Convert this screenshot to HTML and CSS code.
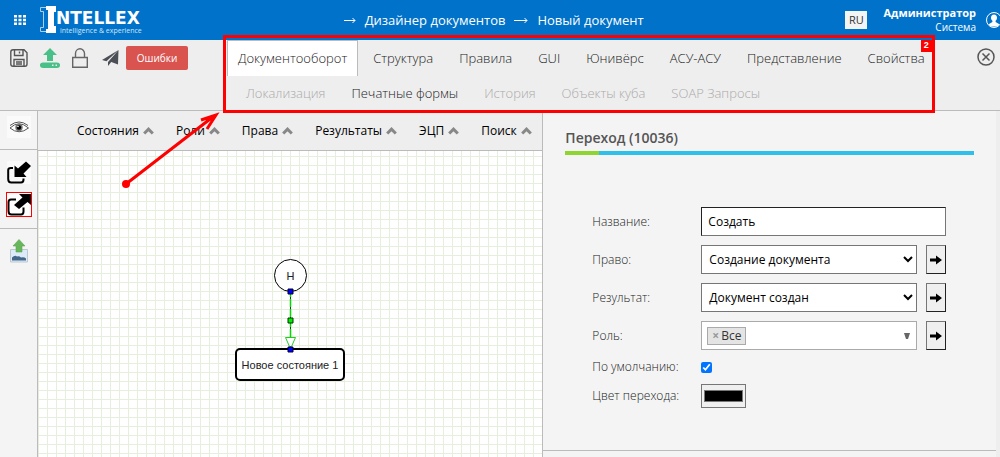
FILE: index.html
```html
<!DOCTYPE html>
<html lang="ru">
<head>
<meta charset="utf-8">
<meta name="viewport" content="width=device-width, initial-scale=1">
<title>Дизайнер документов</title>
<link rel="stylesheet" href="styles.css">
</head>
<body>
<div class="app">
  <header class="header">
    <button class="icon-btn apps" aria-label="Приложения">
      <svg width="12" height="10" viewBox="0 0 12 10" fill="#fff"><path d="M0 0h3v2.6H0zM4.5 0h3v2.6h-3zM9 0h3v2.6H9zM0 3.7h3v2.6H0zM4.5 3.7h3v2.6h-3zM9 3.7h3v2.6H9zM0 7.4h3V10H0zM4.5 7.4h3V10h-3zM9 7.4h3V10H9z"/></svg>
    </button>
    <a class="logo" href="#" aria-label="Intellex">
      <svg class="logo-mark" width="16" height="27" viewBox="0 0 16 27"><path d="M6 1.500H.5v4h3v16h-3v4H6" fill="none" stroke="#a9d0f0"/><path d="M6 0h10v6h-2v14h2v7H6v-4h2V4H6z" fill="#fff"/></svg>
      <span class="logo-text"><b class="logo-name">NTELLEX</b><small class="logo-sub">intelligence &amp; experience</small></span>
    </a>
    <nav class="crumbs">
      <svg width="12" height="7" viewBox="0 0 12 7" fill="none" stroke="#fff"><path d="M0 3.500h11M8.500 1l2.500 2.500L8.500 6"/></svg>
      <a href="#">Дизайнер документов</a>
      <svg width="14" height="7" viewBox="0 0 14 7" fill="none" stroke="#fff"><path d="M0 3.500h13M10.500 1l2.500 2.500L10.500 6"/></svg>
      <a href="#">Новый документ</a>
    </nav>
    <button class="lang">RU</button>
    <div class="user"><b>Администратор</b><span>Система</span></div>
    <div class="avatar">
      <svg width="18" height="18" viewBox="0 0 18 18"><circle cx="9" cy="9" r="7.500" fill="none" stroke="#fff"/><path d="M9 3.500c-2 0-3 1.500-3 3.200 0 1.400.6 2.500 1.400 3.100v1.300L4 13v1l2 1.500h6l2-1.500v-1l-3.400-1.900V9.800c.8-.6 1.400-1.700 1.400-3.100 0-1.700-1-3.200-3-3.200z" fill="#fff"/></svg>
    </div>
  </header>

  <section class="toolbar">
    <div class="tools">
      <button class="icon-btn" aria-label="Сохранить"><svg width="18" height="18" viewBox="0 0 18 18" fill="none" stroke="#555" stroke-width="1.400"><path d="M3 .8h11l3 3V15q0 2.200-2 2.200H3Q.8 17.200.8 15V3Q.8.800 3 .800z"/><path d="M4.500 1v5.500h8.500V1M9.500 2.500v2M4 17v-6.500h10V17M6 13h6M6 15h6"/></svg></button>
      <button class="icon-btn" aria-label="Загрузить"><svg width="20" height="20" viewBox="0 0 20 20" fill="#48c088"><path d="M10 0l7 7h-4v6H7V7H3z"/><path fill-rule="evenodd" d="M3 14.500h14a3 2.700 0 0 1 0 5.500H3a3 2.700 0 0 1 0-5.500zM12 16.500v1.500h1.500v-1.500zM15.500 16.500v1.500H17v-1.500z"/></svg></button>
      <button class="icon-btn" aria-label="Заблокировать"><svg width="16" height="20" viewBox="0 0 16 20" fill="none" stroke="#666" stroke-width="1.400"><path d="M.7 9.500h14.600v9.700H.700zM3.500 9.500V5.500a4.500 4.700 0 0 1 9 0v4"/></svg></button>
      <button class="icon-btn" aria-label="Отправить"><svg width="19" height="16" viewBox="0 0 19 16" fill="#4c4f55"><path d="M18.500 0L2 10l4.500 1.300zM18.500 0L8 12v4l2.800-3.400zM18.500 0L10 11.500l8 3z"/></svg></button>
      <button class="errors">Ошибки</button>
    </div>
    <nav class="tabs">
      <div class="tab-row">
        <button class="tab active">Документооборот</button>
        <button class="tab">Структура</button>
        <button class="tab">Правила</button>
        <button class="tab">GUI</button>
        <button class="tab">Юнивёрс</button>
        <button class="tab">АСУ-АСУ</button>
        <button class="tab">Представление</button>
        <button class="tab">Свойства</button>
      </div>
      <div class="tab-row second">
        <button class="tab" disabled>Локализация</button>
        <button class="tab">Печатные формы</button>
        <button class="tab" disabled>История</button>
        <button class="tab" disabled>Объекты куба</button>
        <button class="tab" disabled>SOAP Запросы</button>
      </div>
      <div class="callout"><span class="callout-number">2</span></div>
    </nav>
    <button class="icon-btn close" aria-label="Закрыть"><svg width="18" height="18" viewBox="0 0 18 18" fill="none" stroke="#555" stroke-width="1.500"><circle cx="9" cy="9" r="8"/><path d="M5.500 5.500l7 7M12.500 5.500l-7 7"/></svg></button>
  </section>

  <main class="workspace">
    <aside class="rail">
      <div class="rail-group view">
        <button class="icon-btn" aria-label="Просмотр"><svg width="24" height="22" viewBox="0 0 24 22"><path fill="#fafafa" d="M0 0h24v22H0z"/><path d="M3 12Q12 3.500 21.500 12 12 19.500 3 12zM3 9.500Q12 2.500 21 9.500" fill="#fff" stroke="#555"/><circle cx="12" cy="11.500" r="3.700" fill="#777"/><circle cx="12" cy="11.500" r="2.200" fill="#000"/><circle cx="11" cy="10.500" r=".8" fill="#fff"/></svg></button>
      </div>
      <div class="rail-group links">
        <button class="icon-btn" aria-label="Входящие"><svg width="24" height="23" viewBox="0 0 24 23"><path fill="#fafafa" d="M0 0h24v23H0z"/><path d="M6 7H4Q1.200 7 1.200 9V18q0 3.500 3 3.500H14q2.500 0 2.500-3v-1" fill="none" stroke="#000" stroke-width="2"/><path d="M19 0.500l5 4.500-7.500 7.500 3 3.500H7.500V4.500L11 7.500z"/></svg></button>
        <button class="icon-btn selected" aria-label="Исходящие"><svg width="24" height="23" viewBox="0 0 24 23"><path fill="#fff" d="M0 0h24v23H0z"/><path d="M9 6.500H4Q1.500 6.500 1.500 9V18q0 3.500 3 3.500H14q2.500 0 2.500-3v-4" fill="none" stroke="#000" stroke-width="2"/><path d="M12 1h12v11l-3.500-3L12 16l-5-4 8.500-7.500z"/></svg></button>
      </div>
      <div class="rail-group">
        <button class="icon-btn" aria-label="Экспорт изображения"><svg width="18" height="24" viewBox="0 0 18 24"><path d="M.5 10.500h17v12.500H.500z" fill="#dcebf7" stroke="#bcc8d2"/><path d="M2 21.500v-3q3-3 5-1 2-1 4 1 3-1 5 1v2z" fill="#456789"/><path d="M9 .5l6 6.500h-3V13H6V7H3z" fill="#67b65c" stroke="#5aa852" stroke-width=".6"/></svg></button>
      </div>
    </aside>

    <section class="diagram">
      <nav class="filters">
        <button class="filter">Состояния<svg class="chev" width="11" height="8" viewBox="0 0 11 8"><path d="M1.200 6.500l4.300-4.300 4.300 4.300"/></svg></button>
        <button class="filter">Роли<svg class="chev" width="11" height="8" viewBox="0 0 11 8"><path d="M1.200 6.500l4.300-4.300 4.300 4.300"/></svg></button>
        <button class="filter">Права<svg class="chev" width="11" height="8" viewBox="0 0 11 8"><path d="M1.200 6.500l4.300-4.300 4.300 4.300"/></svg></button>
        <button class="filter">Результаты<svg class="chev" width="11" height="8" viewBox="0 0 11 8"><path d="M1.200 6.500l4.300-4.300 4.300 4.300"/></svg></button>
        <button class="filter">ЭЦП<svg class="chev" width="11" height="8" viewBox="0 0 11 8"><path d="M1.200 6.500l4.300-4.300 4.300 4.300"/></svg></button>
        <button class="filter">Поиск<svg class="chev" width="11" height="8" viewBox="0 0 11 8"><path d="M1.200 6.500l4.300-4.300 4.300 4.300"/></svg></button>
      </nav>
      <div class="canvas">
        <svg class="link" width="20" height="70" viewBox="0 0 20 70">
          <path d="M10.500 4v52" stroke="#333"/><path d="M10.500 4v52" stroke="#0d0" stroke-width="1.500" stroke-dasharray="8 2"/>
          <path d="M5.500 52.500h10l-4 9h-2z" fill="#fff" stroke="#2c2"/>
          <path d="M8 4h5v5H8zM8 62h5v5H8z" fill="#00f" stroke="#003"/>
          <path d="M8 33h5v5H8z" fill="#0e0" stroke="#030"/>
        </svg>
        <div class="node start">Н</div>
        <div class="node state">Новое состояние 1</div>
      </div>
    </section>

    <section class="panel">
      <div class="panel-body">
        <h2 class="panel-title">Переход (10036)</h2>
        <div class="rule"></div>
        <form class="form">
          <label for="name">Название:</label>
          <div class="field"><input class="box" id="name" type="text" value="Создать"></div>
          <label for="right">Право:</label>
          <div class="field"><select class="box" id="right"><option>Создание документа</option></select>
            <button type="button" class="go" aria-label="Перейти к праву"><svg width="12" height="10" viewBox="0 0 12 10"><path d="M0 3.500h6V.500L12 5 6 9.500v-3H0z"/></svg></button></div>
          <label for="result">Результат:</label>
          <div class="field"><select class="box" id="result"><option>Документ создан</option></select>
            <button type="button" class="go" aria-label="Перейти к результату"><svg width="12" height="10" viewBox="0 0 12 10"><path d="M0 3.500h6V.500L12 5 6 9.500v-3H0z"/></svg></button></div>
          <span class="label" id="role-label">Роль:</span>
          <div class="field"><div class="box multi" role="combobox" tabindex="0" aria-expanded="false" aria-labelledby="role-label"><span class="tag"><button type="button" class="tag-remove" aria-label="Удалить">×</button>Все</span><svg width="6" height="6" viewBox="0 0 6 6" fill="#666"><path d="M0 0h6L4 6H2z"/></svg></div>
            <button type="button" class="go" aria-label="Перейти к роли"><svg width="12" height="10" viewBox="0 0 12 10"><path d="M0 3.500h6V.500L12 5 6 9.500v-3H0z"/></svg></button></div>
          <label for="default">По умолчанию:</label>
          <div class="field low"><input class="check" id="default" type="checkbox" checked></div>
          <label for="color">Цвет перехода:</label>
          <div class="field low"><input class="color" id="color" type="color" value="#000000"></div>
        </form>
      </div>
      <div class="panel-foot"></div>
    </section>
    <svg class="pointer" width="104" height="80" viewBox="0 0 104 80" fill="none" stroke="#f00" stroke-width="3"><circle cx="8" cy="74" r="4" fill="#f00" stroke="none"/><path d="M8 74L96 6M83 10l15-5-9 14"/></svg>
  </main>
</div>
</body>
</html>
```
FILE: styles.css
```css
* { box-sizing: border-box; }
body { margin: 0; font: 13px/18px "Open Sans", "Noto Sans", sans-serif; color: #555; }
button, input, select { font: inherit; color: inherit; }
button { border: 0; padding: 0; background: none; }
a { color: inherit; text-decoration: none; }
svg { display: block; flex: none; }

.app { display: flex; flex-direction: column; min-height: 100vh; overflow: hidden; background: #f4f4f4; }
.icon-btn { display: flex; flex: none; }

.header { display: flex; align-items: center; height: 40px; padding-left: 14px; background: #0072c9; color: #fff; }
.logo { display: flex; margin-left: 14px; }
.logo-text { display: flex; flex-direction: column; padding-top: 4px; }
.logo-name { font: bold 17px/17px "DejaVu Sans", sans-serif; }
.logo-sub { margin-left: 4px; font-size: 7px; line-height: 8px; color: #cfe5f7; }
.crumbs { display: flex; flex: 1; align-items: center; justify-content: center; gap: 9px; }
.lang { width: 22px; height: 18px; background: #f4f4f4; color: #333; font-size: 11px; }
.user { display: flex; flex-direction: column; margin: 0 9px 0 16px; font-size: 11px; line-height: 14px; text-align: right; }
.user span { font-size: 10px; }
.avatar { flex: none; width: 15px; overflow: hidden; }

.toolbar { display: flex; align-items: flex-start; height: 71px; padding: 0 5px 0 10px; background: #eee; border-bottom: 1px solid #bbb; }
.tools { display: flex; flex: none; align-items: center; gap: 12px; width: 217px; padding-top: 6px; }
.errors { width: 62px; height: 24px; margin-left: -5px; border-radius: 2px; background: #d9534f; color: #fff; font-size: 10px; }
.tabs { position: relative; z-index: 1; }
.tab-row { display: flex; gap: 4px; }
.tab { height: 36px; padding: 0 10px 1px; border: 1px solid transparent; border-bottom: 0; color: #222; font-weight: 300; white-space: nowrap; }
.tab.active { background: #fff; border-color: #bbb; }
.tab:disabled { color: #aaa; }
.second { padding-left: 8px; }
.second .tab { height: 34px; }
.callout { position: absolute; inset: -5px 1px -3px -4px; border: 3px solid #f00; pointer-events: none; }
.callout-number { position: absolute; top: 2px; right: 0; width: 11px; padding-bottom: 2px; background: #f00; color: #fff; font: bold 9px/10px "Liberation Sans", Arial, sans-serif; text-align: center; }
.close { margin: 8px 0 0 auto; }

.workspace { position: relative; display: flex; flex: 1; }
.rail { flex: none; width: 38px; border-right: 1px solid #bbb; }
.rail-group { display: flex; flex-direction: column; align-items: center; gap: 8px; padding-top: 10px; }
.view { height: 39px; padding-top: 5px; border-bottom: 1px solid #bbb; }
.links { height: 79px; padding-top: 11px; border-bottom: 1px solid #bbb; }
.selected { border: 1px solid #f00; }

.diagram { display: flex; flex: 507; flex-direction: column; border-right: 1px solid #bbb; }
.filters { display: flex; gap: 22px; height: 40px; padding-left: 39px; border-bottom: 1px solid #bbb; background: #eee; color: #000; font-size: 12px; }
.filter { display: flex; align-items: center; gap: 4px; }
.chev { fill: none; stroke: #888; stroke-width: 3; }
.canvas { position: relative; flex: 1; background-color: #fff; background-image: linear-gradient(#e6eedd 1px, transparent 1px), linear-gradient(90deg, #e6eedd 1px, transparent 1px); background-position: 0 5px, 0 0; background-size: 9px 9px; }
.node { position: absolute; display: flex; align-items: center; justify-content: center; border: 1px solid #000; background: #fff; color: #222; font: 11px/14px "Liberation Sans", Arial, sans-serif; }
.start { left: 236px; top: 108px; width: 33px; height: 33px; border-radius: 50%; }
.state { left: 197px; top: 197px; width: 110px; height: 33px; border-width: 2px; border-radius: 5px; white-space: nowrap; }
.link { position: absolute; z-index: 1; left: 242px; top: 134px; }

.panel { display: flex; flex: 455; flex-direction: column; border-right: 4px solid #eee; }
.panel-body { flex: 1; padding: 17px 22px 0; }
.panel-title { margin: 0; font-size: 14px; line-height: 20px; font-weight: 600; }
.rule { height: 4px; margin-top: 3px; background: linear-gradient(90deg, #8fd531 34px, #2fc0ea 34px); }
.form { display: grid; grid-template-columns: 109px 1fr; align-items: center; row-gap: 9px; padding: 52px 28px 0 27px; font-size: 12px; line-height: 16px; }
.form label, .label { color: #222; font-weight: 300; }
.field { display: flex; align-items: center; gap: 9px; height: 29px; }
.low { height: auto; }
.box { flex: 1; min-width: 0; height: 29px; padding: 0 6px; border: 1px solid #767676; border-radius: 0; background: #fff; color: #000; }
input.box { border-top-color: #222; border-left-color: #222; }
select.box { padding: 0 3px; }
.multi { display: flex; align-items: center; justify-content: space-between; padding: 0 6px 0 5px; border-color: #aaa; }
.tag { display: flex; align-items: center; gap: 2px; height: 18px; padding: 0 4px; border: 1px solid #aaa; background: #e4e4e4; color: #333; }
.tag-remove { color: #999; font-weight: bold; }
.go { display: flex; align-items: center; justify-content: center; width: 20px; height: 29px; border: 1px solid #767676; border-right-color: #222; border-bottom-color: #222; background: #efefef; }
.check { width: 11px; height: 11px; margin: 0; }
.color { width: 45px; height: 24px; padding: 1px 0; border: 1px solid #767676; background: #efefef; }
.panel-foot { height: 7px; border-top: 1px solid #bbb; }
.pointer { position: absolute; z-index: 2; left: 118px; top: -1px; pointer-events: none; }
```
